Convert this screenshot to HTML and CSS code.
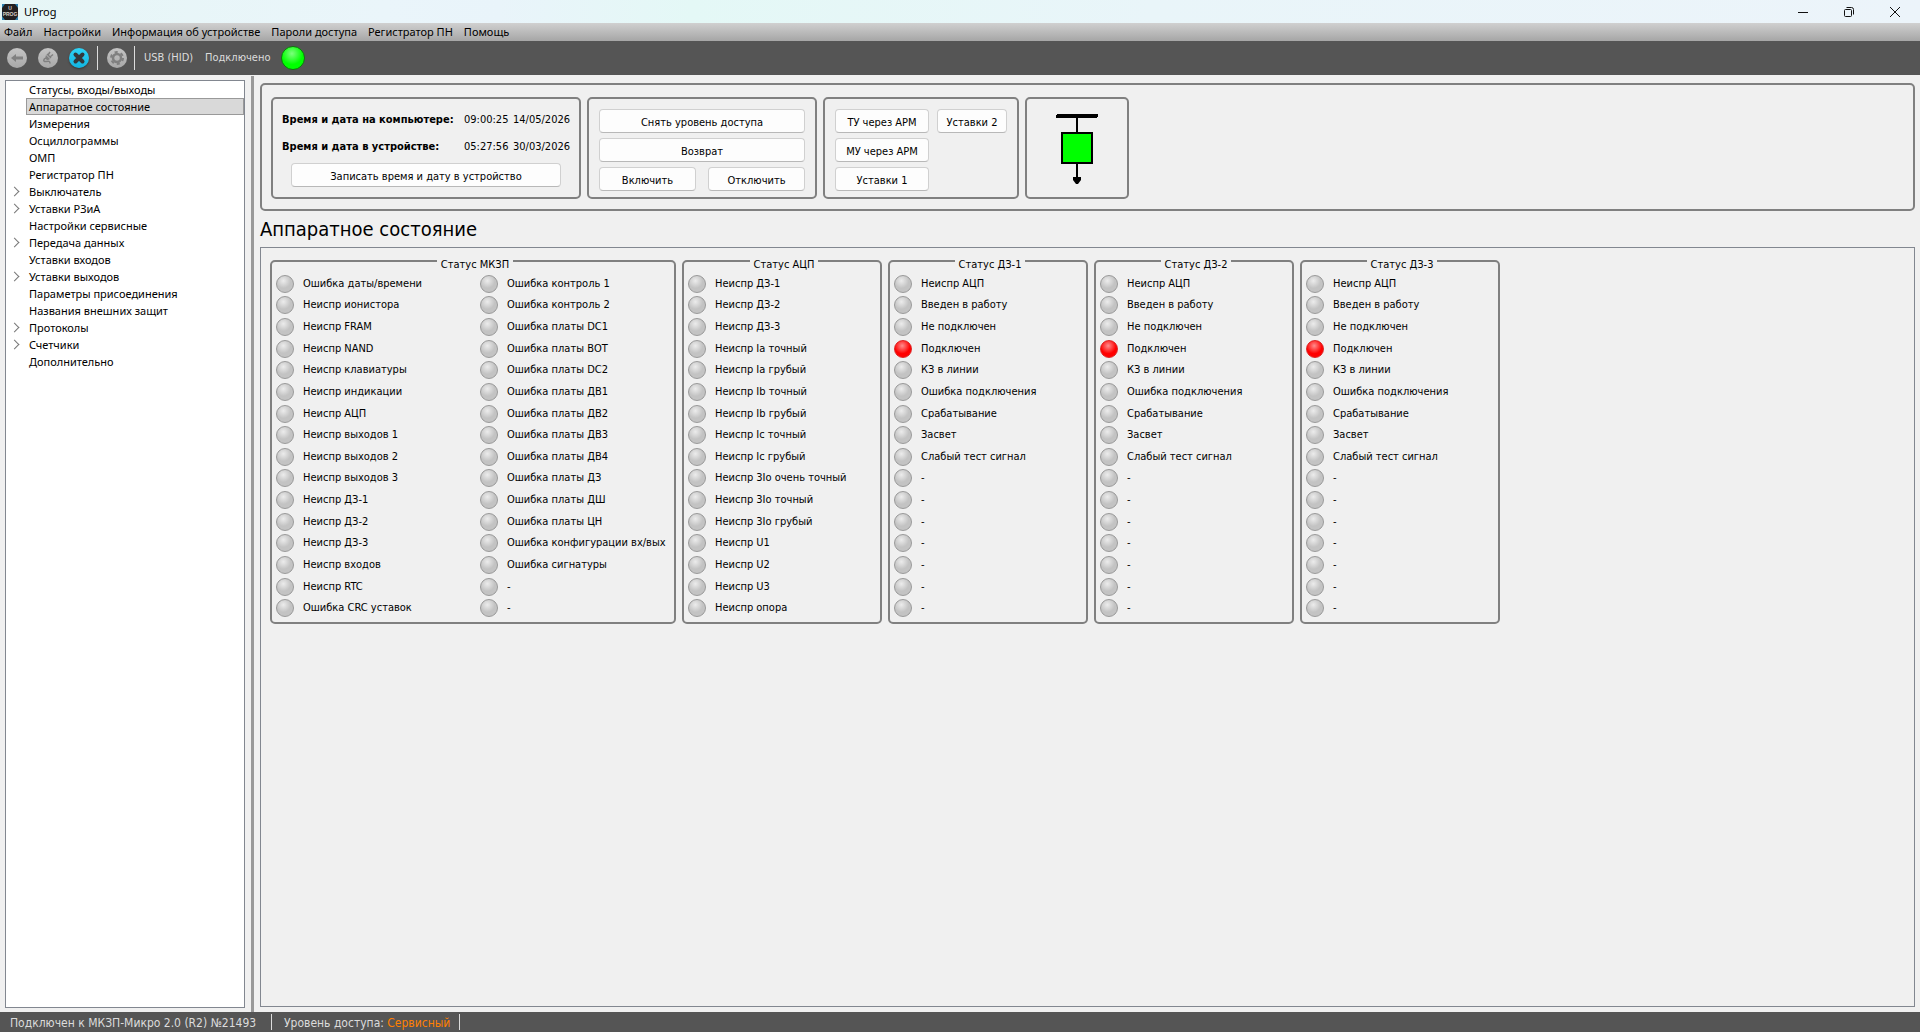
FILE: index.html
```html
<!DOCTYPE html>
<html lang="ru">
<head>
<meta charset="utf-8">
<title>UProg</title>
<link rel="stylesheet" href="styles.css">
</head>
<body>
<header class="titlebar">
  <svg class="app-icon" width="16" height="16" viewBox="0 0 16 16"><rect width="16" height="16" rx="1" fill="#231f20"/><path d="M0 0h3L0 4zM16 0v4l-3-4zM0 16v-4l3 4zM16 16h-3l3-4z" fill="#2d7fae"/><text x="8" y="6" class="icon-text">U</text><text x="8" y="12" class="icon-text">PROG</text></svg>
  <span class="app-name">UProg</span>
  <div class="window-controls">
    <button aria-label="Свернуть"><svg width="12" height="12" viewBox="0 0 12 12"><path d="M1 6.5h10"/></svg></button>
    <button aria-label="Восстановить"><svg width="12" height="12" viewBox="0 0 12 12"><rect x="1.5" y="3.5" width="7" height="7" rx="1"/><path d="M3.5 1.5h5a2 2 0 0 1 2 2v5"/></svg></button>
    <button aria-label="Закрыть"><svg width="12" height="12" viewBox="0 0 12 12"><path d="M1 1l10 10M11 1L1 11"/></svg></button>
  </div>
</header>
<nav class="menubar">
  <button>Файл</button><button>Настройки</button><button>Информация об устройстве</button><button>Пароли доступа</button><button>Регистратор ПН</button><button>Помощь</button>
</nav>
<div class="toolbar">
  <button class="tool" aria-label="Назад" disabled><svg width="16" height="16" viewBox="0 0 16 16"><path d="M2 8l5-4v2.500h7v3H7V12z" fill="#808080"/></svg></button>
  <button class="tool" aria-label="Подключить" disabled><svg width="16" height="16" viewBox="0 0 16 16"><path d="M7 4l4 4M10 2L8 5M13 4.500L10 7" fill="none" stroke="#808080" stroke-width="1.500"/><path d="M6 5l4 4c-2 2-6 1-4-4z" fill="#808080"/><path d="M6 8c-3 1-3 4 0 3.500s4-.5 4 2" fill="none" stroke="#808080" stroke-width="1.500"/></svg></button>
  <button class="tool tool-active" aria-label="Отключить"><svg width="16" height="16" viewBox="0 0 16 16"><path d="M4.500 4.500l7 7M11.500 4.500l-7 7" stroke="#33393d" stroke-width="4" stroke-linecap="round"/></svg></button>
  <span class="separator"></span>
  <button class="tool" aria-label="Параметры" disabled><svg width="16" height="16" viewBox="0 0 16 16"><circle cx="8" cy="8" r="4" fill="none" stroke="#808080" stroke-width="2.500"/><circle cx="8" cy="8" r="6" fill="none" stroke="#808080" stroke-width="2" stroke-dasharray="3.100 3.180"/></svg></button>
  <span class="separator"></span>
  <span class="port">USB (HID)</span>
  <span class="link-state">Подключено</span>
  <span class="led led-link"></span>
</div>
<div class="workspace">
  <aside class="sidebar">
    <ul class="tree">
      <li><a href="#">Статусы, входы/выходы</a></li>
      <li><a href="#" class="selected">Аппаратное состояние</a></li>
      <li><a href="#">Измерения</a></li>
      <li><a href="#">Осциллограммы</a></li>
      <li><a href="#">ОМП</a></li>
      <li><a href="#">Регистратор ПН</a></li>
      <li class="branch"><a href="#">Выключатель</a></li>
      <li class="branch"><a href="#">Уставки РЗиА</a></li>
      <li><a href="#">Настройки сервисные</a></li>
      <li class="branch"><a href="#">Передача данных</a></li>
      <li><a href="#">Уставки входов</a></li>
      <li class="branch"><a href="#">Уставки выходов</a></li>
      <li><a href="#">Параметры присоединения</a></li>
      <li><a href="#">Названия внешних защит</a></li>
      <li class="branch"><a href="#">Протоколы</a></li>
      <li class="branch"><a href="#">Счетчики</a></li>
      <li><a href="#">Дополнительно</a></li>
    </ul>
  </aside>
  <div class="splitter"></div>
  <main class="content">
    <section class="controls">
      <div class="box clock">
        <dl class="times">
          <dt>Время и дата на компьютере:</dt><dd>09:00:25</dd><dd>14/05/2026</dd>
          <dt>Время и дата в устройстве:</dt><dd>05:27:56</dd><dd>30/03/2026</dd>
        </dl>
        <button class="btn btn-sync">Записать время и дату в устройство</button>
      </div>
      <div class="box commands">
        <button class="btn wide">Снять уровень доступа</button>
        <button class="btn wide">Возврат</button>
        <button class="btn">Включить</button>
        <button class="btn">Отключить</button>
      </div>
      <div class="box modes">
        <button class="btn">ТУ через АРМ</button>
        <button class="btn">Уставки 2</button>
        <button class="btn first">МУ через АРМ</button>
        <button class="btn first">Уставки 1</button>
      </div>
      <div class="box scheme">
        <svg width="42" height="70" viewBox="0 0 42 70"><path d="M1 0h41v3h-1v1H0V1h1z"/><path d="M20 4h2v60h-2z"/><rect x="6" y="19" width="30" height="30" fill="#0f0" stroke="#000" stroke-width="2"/><path d="M17 63h8v3l-3 4h-2l-3-4z"/></svg>
      </div>
    </section>
    <h1>Аппаратное состояние</h1>
    <section class="panel">
      <fieldset class="group group-wide">
        <legend>Статус МКЗП</legend>
        <ul class="leds">
          <li>Ошибка даты/времени</li><li>Неиспр ионистора</li><li>Неиспр FRAM</li><li>Неиспр NAND</li><li>Неиспр клавиатуры</li><li>Неиспр индикации</li><li>Неиспр АЦП</li><li>Неиспр выходов 1</li><li>Неиспр выходов 2</li><li>Неиспр выходов 3</li><li>Неиспр ДЗ-1</li><li>Неиспр ДЗ-2</li><li>Неиспр ДЗ-3</li><li>Неиспр входов</li><li>Неиспр RTC</li><li>Ошибка CRC уставок</li>
        </ul>
        <ul class="leds">
          <li>Ошибка контроль 1</li><li>Ошибка контроль 2</li><li>Ошибка платы DC1</li><li>Ошибка платы ВОТ</li><li>Ошибка платы DC2</li><li>Ошибка платы ДВ1</li><li>Ошибка платы ДВ2</li><li>Ошибка платы ДВ3</li><li>Ошибка платы ДВ4</li><li>Ошибка платы ДЗ</li><li>Ошибка платы ДШ</li><li>Ошибка платы ЦН</li><li>Ошибка конфигурации вх/вых</li><li>Ошибка сигнатуры</li><li>-</li><li>-</li>
        </ul>
      </fieldset>
      <fieldset class="group">
        <legend>Статус АЦП</legend>
        <ul class="leds">
          <li>Неиспр ДЗ-1</li><li>Неиспр ДЗ-2</li><li>Неиспр ДЗ-3</li><li>Неиспр Ia точный</li><li>Неиспр Ia грубый</li><li>Неиспр Ib точный</li><li>Неиспр Ib грубый</li><li>Неиспр Ic точный</li><li>Неиспр Ic грубый</li><li>Неиспр 3Io очень точный</li><li>Неиспр 3Io точный</li><li>Неиспр 3Io грубый</li><li>Неиспр U1</li><li>Неиспр U2</li><li>Неиспр U3</li><li>Неиспр опора</li>
        </ul>
      </fieldset>
      <fieldset class="group">
        <legend>Статус ДЗ-1</legend>
        <ul class="leds">
          <li>Неиспр АЦП</li><li>Введен в работу</li><li>Не подключен</li><li class="alarm">Подключен</li><li>КЗ в линии</li><li>Ошибка подключения</li><li>Срабатывание</li><li>Засвет</li><li>Слабый тест сигнал</li><li>-</li><li>-</li><li>-</li><li>-</li><li>-</li><li>-</li><li>-</li>
        </ul>
      </fieldset>
      <fieldset class="group">
        <legend>Статус ДЗ-2</legend>
        <ul class="leds">
          <li>Неиспр АЦП</li><li>Введен в работу</li><li>Не подключен</li><li class="alarm">Подключен</li><li>КЗ в линии</li><li>Ошибка подключения</li><li>Срабатывание</li><li>Засвет</li><li>Слабый тест сигнал</li><li>-</li><li>-</li><li>-</li><li>-</li><li>-</li><li>-</li><li>-</li>
        </ul>
      </fieldset>
      <fieldset class="group">
        <legend>Статус ДЗ-3</legend>
        <ul class="leds">
          <li>Неиспр АЦП</li><li>Введен в работу</li><li>Не подключен</li><li class="alarm">Подключен</li><li>КЗ в линии</li><li>Ошибка подключения</li><li>Срабатывание</li><li>Засвет</li><li>Слабый тест сигнал</li><li>-</li><li>-</li><li>-</li><li>-</li><li>-</li><li>-</li><li>-</li>
        </ul>
      </fieldset>
    </section>
  </main>
</div>
<footer class="statusbar">
  <span class="device">Подключен к МКЗП-Микро 2.0 (R2) №21493</span>
  <span class="access">Уровень доступа: <span class="level">Сервисный</span></span>
</footer>
</body>
</html>
```
FILE: styles.css
```css
* { box-sizing: border-box; }

html, body { height: 100%; }

body {
  display: flex;
  flex-direction: column;
  margin: 0;
  background: #f0f0f0;
  color: #000;
  font: 11px/14px "DejaVu Sans Condensed", "DejaVu Sans", sans-serif;
  white-space: nowrap;
}

button {
  margin: 0;
  padding: 0;
  border: 0;
  background: none;
  color: inherit;
  font: inherit;
}

ul, dl, dd { margin: 0; padding: 0; list-style: none; }

.titlebar {
  display: flex;
  align-items: center;
  flex: none;
  height: 23px;
  padding-left: 2px;
  background: linear-gradient(90deg, #e6f6f6, #eaf5fa 20%, #e9f4fa 26%, #e4f8f6 36%, #e9f5f9 60%, #ecf4fa);
  font-family: "Noto Sans", sans-serif;
}

.icon-text {
  fill: #d8d0c8;
  font: bold 5px "Liberation Sans", sans-serif;
  text-anchor: middle;
}

.app-name { margin-left: 6px; }

.window-controls { display: flex; margin-left: auto; }

.window-controls button {
  display: flex;
  align-items: center;
  justify-content: center;
  width: 46px;
  height: 20px;
}

.window-controls button:last-child { margin-right: 2px; }

.window-controls svg { fill: none; stroke: #111; }

.menubar {
  display: flex;
  align-items: center;
  flex: none;
  gap: 11px;
  height: 18px;
  padding-left: 4px;
  background: linear-gradient(#d0d0d0, #a6a6a6);
  font-family: "Noto Sans", sans-serif;
}

.toolbar {
  display: flex;
  align-items: center;
  flex: none;
  height: 34px;
  padding-left: 7px;
  background: #555;
  color: #dcdcdc;
}

.tool {
  display: flex;
  align-items: center;
  justify-content: center;
  width: 20px;
  height: 20px;
  margin-right: 11px;
  border-radius: 50%;
  background: linear-gradient(#c4c4c4, #a8a8a8);
}

.tool-active {
  margin-right: 8px;
  background: linear-gradient(#2ed3f7, #12b4e0);
  box-shadow: 0 1px 2px #333;
}

.separator {
  width: 1px;
  height: 24px;
  margin-right: 9px;
  background: #dcdcdc;
}

.tool:not(.tool-active) + .separator { margin-left: -4px; }

.port { width: 61px; }

.link-state { width: 76px; }

.led { border-radius: 50%; }

.led-link {
  width: 24px;
  height: 24px;
  border: 1px solid #0b7a0b;
  background: radial-gradient(circle at 45% 30%, #7dff7d, #0f0 55%);
}

.workspace {
  display: flex;
  flex: 1;
  min-height: 0;
}

.sidebar {
  flex: none;
  width: 240px;
  margin: 5px 6px 4px 5px;
  border: 1px solid #828790;
  background: #fff;
  font-family: "Noto Sans", sans-serif;
}

.tree li {
  display: grid;
  grid-template-columns: 20px 1fr;
}

.tree li::before {
  width: 6px;
  height: 6px;
  margin: 5px 0 0 5px;
  border: solid transparent;
  border-width: 1px 1px 0 0;
  content: "";
  transform: rotate(45deg);
}

.tree .branch::before { border-color: #777; }

.tree a {
  height: 17px;
  padding-left: 2px;
  border: 1px solid transparent;
  color: #000;
  line-height: 15px;
  text-decoration: none;
}

.tree .selected { border-color: #999; background: #d9d9d9; }

.splitter {
  flex: none;
  width: 3px;
  margin-top: 1px;
  background: #999;
}

.content {
  display: flex;
  flex: 1;
  flex-direction: column;
  min-width: 0;
  padding: 8px 5px 5px 6px;
}

.controls {
  display: flex;
  flex: none;
  gap: 6px;
  padding: 12px 9px 10px;
  border: 2px solid #808080;
  border-radius: 5px;
}

.box {
  height: 102px;
  border: 2px solid #808080;
  border-radius: 5px;
}

.clock {
  display: flex;
  flex-direction: column;
  align-items: center;
  width: 310px;
  padding-top: 7px;
}

.times {
  display: grid;
  grid-template-columns: 182px 49px 57px;
  line-height: 27px;
}

.times dt { font-weight: bold; }

.btn {
  height: 24px;
  padding-top: 3px;
  border: 1px solid #d0d0d0;
  border-bottom-color: #b8b8b8;
  border-radius: 4px;
  background: #fdfdfd;
}

.btn-sync { width: 270px; margin-top: 3px; }

.commands, .modes {
  display: grid;
  grid-auto-rows: 24px;
  row-gap: 5px;
  padding: 10px;
}

.commands {
  grid-template-columns: 1fr 1fr;
  column-gap: 12px;
  width: 230px;
}

.wide { grid-column: 1 / 3; }

.modes {
  grid-template-columns: 94px 70px;
  column-gap: 8px;
  width: 196px;
}

.first { grid-column: 1; }

.scheme {
  display: flex;
  justify-content: center;
  width: 104px;
  padding-top: 15px;
}

h1 {
  flex: none;
  margin: 0;
  font-size: 20px;
  font-weight: normal;
  line-height: 36px;
}

.panel {
  display: flex;
  flex: 1;
  align-items: flex-start;
  gap: 6px;
  padding: 2px 9px;
  border: 1px solid #828790;
}

.group {
  display: flex;
  width: 200px;
  min-width: 0;
  margin: 0;
  padding: 1px 0 3px 4px;
  border: 2px solid #808080;
  border-radius: 5px;
}

.group-wide { width: 406px; }

.group legend {
  margin: 0 auto;
  padding: 8px 4px 0;
}

.leds {
  display: grid;
  grid-template-rows: repeat(16, 1fr);
  flex: 1;
  height: 346px;
}

.group-wide .leds { flex: none; width: 204px; }

.leds li {
  display: flex;
  align-items: center;
  gap: 9px;
}

.leds li::before {
  flex: none;
  width: 16px;
  height: 16px;
  border: 1px solid #999;
  border-radius: 50%;
  background: radial-gradient(circle at 40% 30%, #ececec, #c3c3c3 50%);
  content: "";
}

.leds .alarm::before {
  border-color: #d22;
  background: radial-gradient(circle at 45% 30%, #ff8d8d, #f00 55%);
}

.statusbar {
  display: flex;
  flex: none;
  gap: 12px;
  height: 20px;
  padding: 2px 0 2px 10px;
  background: #555;
  color: #dcdcdc;
  font-size: 12px;
  line-height: 18px;
}

.statusbar > span { border-right: 1px solid #dcdcdc; }

.device { width: 262px; }

.access { width: 176px; }

.level { color: #ff8000; }
```
